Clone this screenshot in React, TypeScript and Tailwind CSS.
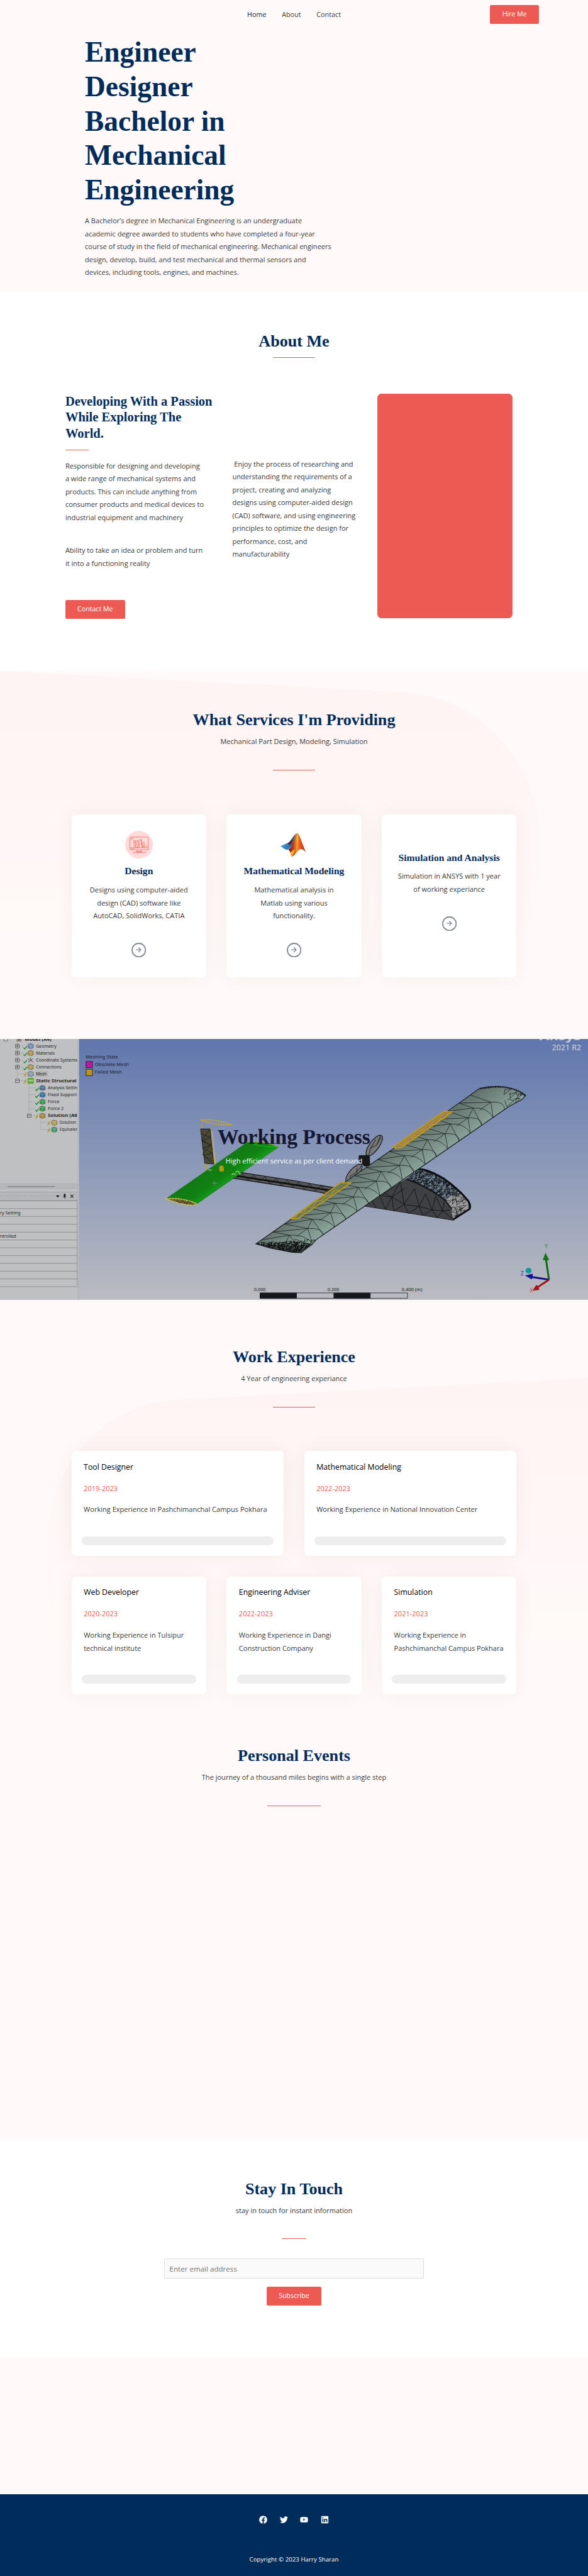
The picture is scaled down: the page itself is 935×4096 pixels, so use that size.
import React from "react";
import { FaFacebook, FaTwitter, FaYoutube, FaLinkedin } from "react-icons/fa";

const SERIF = "font-['Liberation_Serif',serif] font-bold text-[#002c5b]";

function Title({ children, className = "" }: { children: React.ReactNode; className?: string }) {
  return (
    <h2 className={`${SERIF} text-center text-[26.2px] leading-52 tracking-[-0.05px] whitespace-nowrap ${className}`}>
      {children}
    </h2>
  );
}

function Sub({ children, className = "" }: { children: React.ReactNode; className?: string }) {
  return <p className={`text-center leading-32 ${className}`}>{children}</p>;
}

function ArrowCircle({ className = "" }: { className?: string }) {
  return (
    <svg viewBox="0 0 36 36" className={`mx-auto block size-36 ${className}`} fill="none" stroke="#7f8a93">
      <circle cx="18" cy="18" r="16.5" strokeWidth="2.8" />
      <path d="M11 17.300H23.500M17.300 11.600l5.700 5.700-5.700 5.700" strokeWidth="2" />
    </svg>
  );
}

function DesignIcon() {
  return (
    <svg viewBox="0 0 68 68" className="mx-auto block size-68" fill="none" stroke="#ee564d" strokeWidth="1.1">
      <circle cx="34" cy="34" r="34" fill="#ffdcda" stroke="none" />
      <rect x="11.500" y="15.500" width="45" height="31" rx="2" />
      <path d="M11.500 41.500h45M14 44.300h8.500M14 18.500h7M14 21h3" />
      <path d="M29.500 46.500v4.500h9.500v-4.500M26 51.300h16.500M18 53h34" />
      <path d="M21.500 41V28.500h3.500V41M27.500 41V27l2.300-4.500 2.300 4.500V41zM34 41V22h7v19M37.500 25H41M38.500 28H41M37.500 31H41M38.500 34H41M43 41v-8.500l2-4 2.200 4V41M45 36v5M50 38.500h4M52 35.500h2" />
      <circle cx="23.200" cy="25.500" r="2.500" />
    </svg>
  );
}

function MatlabIcon() {
  return (
    <svg viewBox="0 0 68 68" className="mx-auto block size-68">
      <defs>
        <linearGradient id="mlOrange" x1="0" y1="0" x2="1" y2="0">
          <stop offset="0" stopColor="#6b1616" />
          <stop offset="0.28" stopColor="#c2401b" />
          <stop offset="0.5" stopColor="#f59a25" />
          <stop offset="0.62" stopColor="#e8601f" />
          <stop offset="1" stopColor="#b3201f" />
        </linearGradient>
        <linearGradient id="mlBlue" x1="0" y1="0" x2="1" y2="0">
          <stop offset="0" stopColor="#3f9ad8" />
          <stop offset="1" stopColor="#1d4f86" />
        </linearGradient>
      </defs>
      <path d="M2 37.500 19 30c6-2 7-7 11-12 5-7 10-12 13-12L30 35l-9 11-5 .500C11 46 7 41 2 37.500z" fill="url(#mlBlue)" />
      <path d="M19 30c5-2 7-5 10-9l2 3-6 11z" fill="#5e1a26" />
      <path d="M21 46C33 39 34 6 43 6c5 0 14 32 21 46-5-4-9-8-13-7-7 1-12 15-22 18-2-5-3-12-8-17z" fill="url(#mlOrange)" />
      <path d="M25 53c4-1 8-6 11-8-1 7-2 12-7 18-2-3-3-6-4-10z" fill="#f9b233" />
      <path d="M43 9c2 6 1.500 14 .500 21-2-6-2.500-14-.500-21z" fill="#f7d23a" />
    </svg>
  );
}

function ServiceCard({
  icon,
  title,
  lines,
  className = "",
}: {
  icon?: React.ReactNode;
  title: string;
  lines: string[];
  className?: string;
}) {
  return (
    <div className={`h-400 w-330 rounded-[6.5px] bg-white text-center shadow-[0_0_32px_rgba(60,20,20,0.06)] ${className}`}>
      {icon}
      <h3 className={`${SERIF} mt-18 text-[15.600px] leading-28 whitespace-nowrap`}>{title}</h3>
      <div className="mt-16">
        {lines.map((l) => (
          <p key={l} className="leading-32 whitespace-nowrap">
            {l}
          </p>
        ))}
      </div>
      <ArrowCircle className="mt-49" />
    </div>
  );
}

function JobCard({ title, years, lines, className = "" }: { title: string; years: string; lines: string[]; className?: string }) {
  return (
    <div className={`flex flex-col rounded-[6.5px] bg-white px-25 shadow-[0_0_32px_rgba(60,20,20,0.06)] ${className}`}>
      <h4 className="mt-24 pl-5 text-[12.300px] leading-32 text-black">{title}</h4>
      <p className="mt-20 pl-5 leading-32 text-[#ec5a53]">{years}</p>
      <div className="mt-20 pl-5">
        {lines.map((l) => (
          <p key={l} className="leading-32 whitespace-nowrap">
            {l}
          </p>
        ))}
      </div>
      <div className="mt-auto mb-25 h-22 rounded-[6.5px] bg-[#eeeeee]" />
    </div>
  );
}

type Pt = [number, number];
const lerp = (a: Pt, b: Pt, t: number): Pt => [a[0] + (b[0] - a[0]) * t, a[1] + (b[1] - a[1]) * t];
const p = (v: Pt) => `${v[0].toFixed(0)} ${v[1].toFixed(0)}`;

function wingMesh() {
  let d = "";
  const n = 17;
  for (let i = 0; i <= n; i++) {
    const t = i / n;
    const t1 = (i + 1) / n;
    const mid = lerp([2618, 412], [1580, 1170], t);
    const lead = lerp([2690, 455], [1665, 1205], t);
    const leadN = lerp([2690, 455], [1665, 1205], t1);
    const midN = lerp([2618, 412], [1580, 1170], t1);
    const trail = lerp([2510, 372], [1455, 1145], t);
    const trailN = lerp([2510, 372], [1455, 1145], t1);
    const q = i % 2 ? lerp(mid, trail, 0.3) : mid;
    d += `M${p(q)}Q${q[0] + 75} ${q[1] - 6} ${p(lead)}`;
    d += `M${p(q)}L${p(leadN)}M${p(q)}L${p(trail)}M${p(q)}L${p(trailN)}M${p(q)}L${p(midN)}`;
  }
  return d;
}

function denseMesh(x0: number, y0: number, x1: number, y1: number, step: number) {
  let d = "";
  let s = 7;
  const r = () => {
    s = (s * 16807) % 2147483647;
    return (s / 2147483647 - 0.5) * step * 0.8;
  };
  for (let y = y0; y <= y1; y += step) {
    for (let x = x0; x <= x1; x += step) {
      const a = x + r();
      const b = y + r();
      d += `M${a.toFixed(0)} ${b.toFixed(0)}l${step} ${r().toFixed(0)}l${(-step + r()).toFixed(0)} ${step}l${r().toFixed(0)} ${-step}`;
    }
  }
  return d;
}

const TREE: { y: number; lvl: number; t: string; b?: boolean; box?: string; c: string; ok?: boolean }[] = [
  { y: 95, lvl: 0, t: "Geometry", box: "+", c: "#6f8fb8", ok: true },
  { y: 134, lvl: 0, t: "Materials", box: "+", c: "#b8944a", ok: true },
  { y: 174, lvl: 0, t: "Coordinate Systems", box: "+", c: "", ok: true },
  { y: 213, lvl: 0, t: "Connections", box: "+", c: "#b09a50", ok: true },
  { y: 252, lvl: 0, t: "Mesh", c: "#8d9db3" },
  { y: 291, lvl: 0, t: "Static Structural", b: true, box: "-", c: "#5fa83a" },
  { y: 331, lvl: 1, t: "Analysis Settin", c: "#4c6ea0", ok: true },
  { y: 370, lvl: 1, t: "Fixed Support", c: "#2f6fb4", ok: true },
  { y: 409, lvl: 1, t: "Force", c: "#2e9c48", ok: true },
  { y: 448, lvl: 1, t: "Force 2", c: "#2e9c48", ok: true },
  { y: 488, lvl: 1, t: "Solution (A6", b: true, box: "-", c: "#a88a3c" },
  { y: 527, lvl: 2, t: "Solution", c: "#b8a04c" },
  { y: 566, lvl: 2, t: "Equivaler", c: "#3f9c6c" },
];

const TREE_WIDTH: Record<string, number> = {
  Geometry: 109,
  Materials: 100,
  "Coordinate Systems": 221,
  Connections: 136,
  Mesh: 57,
  "Static Structural": 216,
  "Analysis Settin": 158,
  "Fixed Support": 155,
  Force: 62,
  "Force 2": 85,
  "Solution (A6": 157,
  Solution: 88,
  Equivaler: 96,
};

function Simulation() {
  return (
    <svg
      viewBox="0 55 3136 1473"
      preserveAspectRatio="none"
      className="absolute inset-0 size-full font-['Noto_Sans',sans-serif]"
      fontSize="27"
    >
      <defs>
        <linearGradient id="sky" x1="0" y1="0" x2="0" y2="1">
          <stop offset="0" stopColor="#6076ad" />
          <stop offset="0.5" stopColor="#8d9ab9" />
          <stop offset="1" stopColor="#bbbcc1" />
        </linearGradient>
        <linearGradient id="wing" gradientUnits="userSpaceOnUse" x1="2080" y1="690" x2="2180" y2="830">
          <stop offset="0" stopColor="#63736e" />
          <stop offset="1" stopColor="#8aa39a" />
        </linearGradient>
        <linearGradient id="tail" gradientUnits="userSpaceOnUse" x1="1100" y1="800" x2="1180" y2="905">
          <stop offset="0" stopColor="#117a14" />
          <stop offset="0.6" stopColor="#118213" />
          <stop offset="1" stopColor="#13a31a" />
        </linearGradient>
        <clipPath id="wingClip">
          <path d="M1364 1212 1475 1130 2388 462 2560 333Q2625 318 2690 325 2770 340 2804 374L2785 396 2715 436 1688 1187 1665 1215 1605 1262 1560 1260 1440 1235z" />
        </clipPath>
        <clipPath id="podClip">
          <path d="M2165 848 2240 785Q2290 790 2370 840 2450 900 2500 965 2520 1000 2508 1018L2420 1078 2403 1015 2370 965Q2270 885 2165 848z" />
        </clipPath>
        <clipPath id="panelClip">
          <rect x="0" y="55" width="413" height="1473" />
        </clipPath>
      </defs>
      <rect x="414" y="55" width="2722" height="1473" fill="url(#sky)" />
      <rect x="0" y="55" width="422" height="1473" fill="#b4b6b9" />
      <rect x="0" y="55" width="414" height="814" fill="#bfc0c2" />
      <rect x="0" y="905" width="414" height="623" fill="#bfc0c2" />
      <path d="M40 889H292" stroke="#7a7b7d" strokeWidth="5" />
      <g clipPath="url(#panelClip)">
        <path d="M92 70V291M155 310V488M218 508V566" stroke="#77787a" strokeWidth="2" strokeDasharray="3 3" />
        <rect x="21" y="46" width="19" height="20" fill="#d8d8d8" stroke="#444" strokeWidth="2.500" />
        <rect x="88" y="50" width="28" height="20" fill="#b3933c" />
        <rect x="94" y="52" width="16" height="14" fill="#4d77b0" />
        <text x="132" y="65" fontWeight="700" fill="#1c1c1e" textLength="142" lengthAdjust="spacingAndGlyphs">
          Model (A4)
        </text>
        <rect x="188" y="235" width="66" height="35" fill="#b4b5b8" />
        {TREE.map((r) => {
          const x = 92 + r.lvl * 63;
          return (
            <g key={r.t}>
              <path d={`M${x} ${r.y}H${x + 34}`} stroke="#77787a" strokeWidth="2" strokeDasharray="3 3" />
              {r.box && (
                <>
                  <rect x={x - 9} y={r.y - 9} width="19" height="19" fill="#cfcfd0" stroke="#333" strokeWidth="2.500" />
                  <path d={r.box === "+" ? `M${x - 5} ${r.y}h11M${x} ${r.y - 6}v12` : `M${x - 5} ${r.y}h11`} stroke="#111" strokeWidth="2.500" />
                </>
              )}
              {r.ok ? (
                <path d={`M${x + 34} ${r.y + 8}l6 8 12-16`} stroke="#148a1c" strokeWidth="4.500" fill="none" />
              ) : (
                <path d={`M${x + 50} ${r.y - 8}l-14 12 8 1-10 12 15-12-7-2z`} stroke="#a8870f" strokeWidth="2" fill="#d2ab1e" />
              )}
              {r.t === "Coordinate Systems" ? (
                <g strokeWidth="4" fill="none">
                  <path d={`M${x + 71} ${r.y + 2}v-16`} stroke="#21a035" />
                  <path d={`M${x + 58} ${r.y + 12}l24-18`} stroke="#3a62b4" />
                  <path d={`M${x + 58} ${r.y - 8}l26 20`} stroke="#c13a3a" />
                </g>
              ) : r.t === "Static Structural" ? (
                <>
                  <rect x={x + 55} y={r.y - 16} width="33" height="33" fill="#5fa83a" />
                  <path d={`M${x + 60} ${r.y - 3}h24M${x + 66} ${r.y - 3}l-4 8M${x + 74} ${r.y - 3}l-4 8M${x + 82} ${r.y - 3}l-4 8`} stroke="#dfe8da" strokeWidth="2.500" />
                </>
              ) : (
                <>
                  <path
                    d={`M${x + 57} ${r.y - 9}l12-5 17 5v19l-12 6-17-6z`}
                    fill={r.c}
                    stroke="#4c4c46"
                    strokeWidth="2"
                    strokeLinejoin="round"
                  />
                  <path d={`M${x + 57} ${r.y - 7}l16 5 12-5M${x + 73} ${r.y - 2}v16`} stroke="#d3d6cf" strokeWidth="2" fill="none" opacity="0.7" />
                </>
              )}
              <text
                x={x + 100}
                y={r.y + 9}
                fontWeight={r.b ? 700 : 400}
                fill="#262628"
                textLength={TREE_WIDTH[r.t]}
                lengthAdjust="spacingAndGlyphs"
              >
                {r.t}
              </text>
            </g>
          );
        })}
        <path d="M0 919H413V968H0" fill="#b6b8ba" stroke="#8c8d8f" strokeWidth="2" />
        <path d="M0 937H290M0 943H290M0 949H290" stroke="#8f9092" strokeWidth="2" strokeDasharray="2 5" />
        <path d="M299 939h18l-9 11zM341 931h8v16h-8zM335 948h20M345 948v10" fill="#242426" stroke="#242426" strokeWidth="2" />
        <path d="M376 934l15 17M391 934l-15 17" stroke="#242426" strokeWidth="4" />
        <path
          d="M0 969H412M0 1013H412M0 1057H412M0 1101H412M0 1146H412M0 1190H412M0 1234H412M0 1278H412M0 1322H412M0 1366H412M0 1410H412M0 1454H412M412 969V1454"
          stroke="#85868a"
          strokeWidth="3"
        />
        <text x="0" y="1044" fill="#262628" textLength="110" lengthAdjust="spacingAndGlyphs">ry Setting</text>
        <text x="0" y="1176" fill="#262628" textLength="86" lengthAdjust="spacingAndGlyphs">ntrolled</text>
      </g>

      <text x="457" y="164" fill="#1b1f30" textLength="173" lengthAdjust="spacingAndGlyphs">Meshing State</text>
      <rect x="459" y="182" width="34" height="36" fill="#c015a0" stroke="#20222e" strokeWidth="3" />
      <rect x="459" y="226" width="34" height="36" fill="#bb9512" stroke="#20222e" strokeWidth="3" />
      <text x="506" y="207" fill="#1b1f30" textLength="182" lengthAdjust="spacingAndGlyphs">Obsolete Mesh</text>
      <text x="506" y="251" fill="#1b1f30" textLength="145" lengthAdjust="spacingAndGlyphs">Failed Mesh</text>

      <path d="M1245 842 1280 808 1568 855 1790 896 1750 930 1568 895z" fill="#57585a" stroke="#111" strokeWidth="4" />
      <path d="M1262 828 1568 878 1770 912" stroke="#0c0c0d" strokeWidth="9" fill="none" />
      <path
        d="M1262 840l30-24 30 38 30-30 30 40 30-30 30 40 30-30 30 40 30-30 30 38 30-28 30 38 30-28 30 38 30-28 30 36 30-26"
        stroke="#111"
        strokeWidth="3"
        fill="none"
      />

      <path d="M1075 535V560M1122 560 1146 765M1098 757l6 40" stroke="#c19a22" strokeWidth="9" strokeDasharray="8 4" fill="none" />
      <path d="M1132 580 1148 760" stroke="#c9c4bd" strokeWidth="5" strokeDasharray="6 5" />
      <path d="M1070 563H1120L1140 762 1092 757z" fill="#4b4a36" stroke="#141410" strokeWidth="3" />
      <path d="M1072 590l50 20-46 20 50 26-46 14 52 30-48 12 52 34M1120 565l-44 60 48 30-44 50 52 54" stroke="#15150f" strokeWidth="2.500" fill="none" />
      <path d="M1070 512Q1150 506 1236 540 1150 545 1070 512z" fill="none" stroke="#c4a53c" strokeWidth="8" strokeDasharray="9 4" />

      <path d="M887 955 1320 636Q1410 632 1486 664L1050 986Q970 950 887 955z" fill="url(#tail)" />
      <path d="M1320 636Q1420 634 1486 666" fill="none" stroke="#c0a020" strokeWidth="5" strokeDasharray="7 4" />
      <path d="M1322 640Q1400 668 1484 664" fill="none" stroke="#17c422" strokeWidth="3" />
      <path d="M887 957Q970 948 1050 986 1040 996 1000 992 930 980 887 957z" fill="#6d6535" stroke="#d0c050" strokeWidth="6" strokeDasharray="12 3" />
      <path d="M940 966l20 14 14-12 18 18 14-14 22 18" stroke="#111" strokeWidth="3" fill="none" />
      <path d="M1050 985 1486 666" stroke="#0c4d10" strokeWidth="3" strokeDasharray="4 3" />
      <path d="M1170 775q11-10 22 0l3 25q-13 8-26 0z" fill="#bb9512" />
      <path d="M1236 822q12-14 20 2M1256 808q14-14 20 2l6 12M1112 794l18 2" stroke="#cfd49c" strokeWidth="4" fill="none" />
      <path d="M1130 869h28M1144 855v28" stroke="#6f8cb4" strokeWidth="3" />

      <ellipse cx="1996" cy="657" rx="26" ry="68" transform="rotate(34 1996 657)" fill="#77787a" stroke="#121212" strokeWidth="4" />
      <ellipse cx="1888" cy="812" rx="24" ry="62" transform="rotate(40 1888 812)" fill="#77787a" stroke="#121212" strokeWidth="4" />
      <path d="M2030 602l-20 50-34 20 30-50M2010 652l20-40M1976 672l-8 34M1930 770l-30 40-34 20 10 20M1900 810l6-28" stroke="#121212" strokeWidth="3" fill="none" />
      <path d="M1914 712 1972 710 1974 770 1945 776 1912 745z" fill="#17181a" />

      <path d="M2165 848 1940 998 2420 1079 2405 1015 2370 965Q2270 885 2165 848z" fill="#3f4043" stroke="#121212" strokeWidth="3" />
      <path
        d="M2090 947 2025 910M2090 947l-70 -10M2090 947l-35 70M2090 947l45 -90M2090 947l70 -50M2090 947l10 78M2090 947l65 40M2155 990l-55 35M2155 990l25 50M2155 990l55-90M2155 990l-20-133M2155 990l80 10M2235 1000l-55 40M2235 1000l20 50M2235 1000l35-70M2235 1000l-25-100M2235 1000l70 20M2305 1020l-50 30M2305 1020l25 42M2305 1020l20-80M2305 1020l-35-90M2305 1020l55 5M2360 1025l-30 38M2360 1025l60 50M2360 1025l10-60M2360 1025l-35-80M2360 1025l48-5M1985 968l20 40M2025 940l30 75"
        stroke="#0f0f10"
        strokeWidth="3"
        fill="none"
      />
      <g clipPath="url(#podClip)">
        <rect x="2150" y="780" width="380" height="310" fill="#6b7c8e" />
        <path d="M2372 965 2452 912 2520 960 2530 1020 2420 1085z" fill="#9a9a9c" />
        <path d={denseMesh(2150, 780, 2520, 940, 15)} stroke="#101214" strokeWidth="3" fill="none" />
        <path d={denseMesh(2380, 940, 2520, 1080, 28)} stroke="#101214" strokeWidth="2.500" fill="none" />
        <path d="M2240 785Q2290 790 2370 840 2450 900 2500 965 2520 1000 2508 1018L2420 1078" stroke="#0f1012" strokeWidth="20" fill="none" />
        <path d="M2165 848Q2270 885 2370 965L2403 1015" stroke="#0f1012" strokeWidth="14" fill="none" />
      </g>

      <g clipPath="url(#wingClip)">
        <rect x="1350" y="310" width="1480" height="960" fill="url(#wing)" />
        <path d={wingMesh()} stroke="#131716" strokeWidth="2.500" fill="none" />
        <path d={denseMesh(2710, 330, 2810, 430, 34)} stroke="#131716" strokeWidth="2.500" fill="none" />
        <path d={denseMesh(1540, 1190, 1670, 1260, 26)} stroke="#131716" strokeWidth="2.500" fill="none" />
        <path d="M1364 1212 1568 1225 1640 1230 1605 1265 1560 1262 1440 1238z" fill="#3a403f" />
        <path d={denseMesh(1370, 1205, 1640, 1260, 20)} stroke="#0c0e0e" strokeWidth="4" fill="none" />
        <path d="M2560 333Q2640 318 2700 325 2770 340 2804 374" stroke="#151817" strokeWidth="14" strokeDasharray="9 4" fill="none" />
      </g>
      <path
        d="M1364 1212 1475 1130 2388 462 2560 333Q2625 318 2690 325 2770 340 2804 374L2785 396 2715 436 1688 1187 1665 1215 1605 1262 1560 1260 1440 1235z"
        fill="none"
        stroke="#171b1a"
        strokeWidth="4"
      />
      <path d="M2098 664 2368 463 2412 466 2350 512 2140 668 2110 672z" fill="#967d5c" stroke="#c29a14" strokeWidth="7" />
      <path d="M2120 662 2380 470M2140 662l30-30 20 0 20-32 24 2 22-34 24 0 20-32 26 0 20-32 24 2 20-34" stroke="#c29a14" strokeWidth="4" fill="none" />
      <path d="M1550 1070 1818 866 1870 868 1760 948 1590 1068z" fill="#6b7a55" stroke="#c29a14" strokeWidth="6" />
      <path d="M1570 1066l24-30 24 0 22-34 26 2 22-34 26 0 22-32 26 0 22-30 26 0" stroke="#c29a14" strokeWidth="4" fill="none" />

      <g fill="#15171b">
        <text x="1355" y="1478" textLength="62" lengthAdjust="spacingAndGlyphs">0.000</text>
        <text x="1747" y="1478" textLength="62" lengthAdjust="spacingAndGlyphs">0.200</text>
        <text x="2142" y="1478" textLength="110" lengthAdjust="spacingAndGlyphs">0.400 (m)</text>
        <rect x="1387" y="1489" width="786" height="30" fill="#b9babf" stroke="#2a2b2e" strokeWidth="3" />
        <rect x="1386" y="1488" width="197" height="32" />
        <rect x="1779" y="1488" width="197" height="32" />
      </g>

      <text x="2876" y="62" fill="#c3c8d3" fontWeight="700" fontSize="66" textLength="222" lengthAdjust="spacingAndGlyphs">Ansys</text>
      <text x="2944" y="119" fill="#c3c8d3" fontSize="42" fontWeight="500" textLength="155" lengthAdjust="spacingAndGlyphs">2021 R2</text>

      <g fontSize="30">
        <path d="M2928 1414 2912 1300" stroke="#0f6a14" strokeWidth="10" />
        <path d="M2909 1262l20 40q-16 8-34 0z" fill="#127616" />
        <path d="M2928 1414 2830 1398" stroke="#14148a" strokeWidth="10" />
        <path d="M2800 1391l40-11q4 16-4 32z" fill="#1212a0" />
        <path d="M2928 1414 2868 1456" stroke="#a01214" strokeWidth="10" />
        <path d="M2840 1476l20-32q14 4 16 28z" fill="#a81214" />
        <circle cx="2819" cy="1363" r="16" fill="#12999c" />
        <text x="2905" y="1239" fill="#2f9040">Y</text>
        <text x="2776" y="1389" fill="#3038c0">Z</text>
        <text x="2825" y="1487" fill="#c84a50">X</text>
      </g>
    </svg>
  );
}

const BTN = "flex items-center justify-center rounded-[2.600px] bg-[#ec5a53] text-[10.600px] text-white";

export default function App() {
  return (
    <div className="w-full overflow-hidden bg-[#fffaf9] font-['Open_Sans',sans-serif] text-[11.040px] text-[#3a3a3a] [--spacing:0.64925px]">
      <section className="h-714.5">
        <header className="relative flex h-70 items-center justify-end pr-120">
          <nav className="absolute inset-x-0 flex justify-center gap-38 text-[10.800px]">
            <a className="text-[#002c5b]">Home</a>
            <a>About</a>
            <a>Contact</a>
          </nav>
          <a className={`${BTN} z-10 h-46 w-120`}>Hire Me</a>
        </header>
        <div className="pt-16 pl-208">
          <h1 className={`${SERIF} text-[45.450px] leading-84.5`}>
            Engineer
            <br />
            Designer
            <br />
            Bachelor in
            <br />
            Mechanical
            <br />
            Engineering
          </h1>
          <p className="mt-17 w-640 leading-31.5 whitespace-nowrap">
            A Bachelor’s degree in Mechanical Engineering is an undergraduate
            <br />
            academic degree awarded to students who have completed a four-year
            <br />
            course of study in the field of mechanical engineering. Mechanical engineers
            <br />
            design, develop, build, and test mechanical and thermal sensors and
            <br />
            devices, including tools, engines, and machines.
          </p>
        </div>
      </section>

      <section className="h-929.5 bg-white pt-95.5">
        <Title>About Me</Title>
        <div className="mx-auto mt-13 h-2 w-103 bg-[#ec5a53]" />
        <div className="mt-87 flex pl-160">
          <div className="w-409">
            <h3 className={`${SERIF} text-[20.600px] leading-39 tracking-[-0.03px] whitespace-nowrap`}>
              Developing With a Passion
              <br />
              While Exploring The
              <br />
              World.
            </h3>
            <div className="mt-20.5 h-2 w-57 bg-[#ec5a53]" />
            <p className="mt-22.5 leading-31.5 whitespace-nowrap">
              Responsible for designing and developing
              <br />
              a wide range of mechanical systems and
              <br />
              products. This can include anything from
              <br />
              consumer products and medical devices to
              <br />
              industrial equipment and machinery
            </p>
            <p className="mt-49.5 leading-31.5 whitespace-nowrap">
              Ability to take an idea or problem and turn
              <br />
              it into a functioning reality
            </p>
            <a className={`${BTN} mt-74 h-46 w-146`}>Contact Me</a>
          </div>
          <p className="mt-157 w-355 leading-31.5 whitespace-nowrap">
            &nbsp;Enjoy the process of researching and
            <br />
            understanding the requirements of a
            <br />
            project, creating and analyzing
            <br />
            designs using computer-aided design
            <br />
            (CAD) software, and using engineering
            <br />
            principles to optimize the design for
            <br />
            performance, cost, and
            <br />
            manufacturability
          </p>
          <div className="h-550 w-331 rounded-[6.500px] bg-[#ec5a53]" />
        </div>
      </section>

      <section className="relative h-900">
        <svg viewBox="0 0 1440 900" preserveAspectRatio="none" className="absolute inset-0 size-full">
          <defs>
            <linearGradient id="blobA" gradientUnits="userSpaceOnUse" x1="0" y1="0" x2="0" y2="690">
              <stop offset="0" stopColor="#fef4f3" />
              <stop offset="0.400" stopColor="#fff5f5" />
              <stop offset="1" stopColor="#fffaf9" />
            </linearGradient>
          </defs>
          <path d="M0 0 996 52C1180 66 1322 230 1322 420V700H0z" fill="url(#blobA)" />
        </svg>
        <div className="relative pt-94">
          <Title>What Services I'm Providing</Title>
          <Sub className="mt-11">Mechanical Part Design, Modeling, Simulation</Sub>
          <div className="mx-auto mt-52 h-2 w-103 bg-[#ec5a53]" />
          <div className="mt-107 flex justify-center gap-50">
            <ServiceCard
              className="pt-40"
              icon={<DesignIcon />}
              title="Design"
              lines={["Designs using computer-aided", "design (CAD) software like", "AutoCAD, SolidWorks, CATIA"]}
            />
            <ServiceCard
              className="pt-40"
              icon={<MatlabIcon />}
              title="Mathematical Modeling"
              lines={["Mathematical analysis in", "Matlab using various", "functionality."]}
            />
            <ServiceCard
              className="pt-75"
              title="Simulation and Analysis"
              lines={["Simulation in ANSYS with 1 year", "of working experiance"]}
            />
          </div>
        </div>
      </section>

      <section className="relative h-639 overflow-hidden">
        <Simulation />
        <div className="relative pt-209 text-center">
          <h2 className="font-['Liberation_Serif',serif] text-[33.600px] leading-66 font-bold text-[#15162f]">Working Process</h2>
          <p className="mt-9 leading-32 text-white">High efficient service as per client demand</p>
        </div>
      </section>

      <section className="relative h-1067">
        <svg viewBox="0 0 1440 1067" preserveAspectRatio="none" className="absolute inset-0 size-full">
          <defs>
            <linearGradient id="blobB" gradientUnits="userSpaceOnUse" x1="0" y1="190" x2="0" y2="900">
              <stop offset="0" stopColor="#fef4f3" />
              <stop offset="0.450" stopColor="#fff6f6" />
              <stop offset="1" stopColor="#fffaf9" />
            </linearGradient>
          </defs>
          <path d="M1440 191 431 244C260 256 117 400 117 590V900H1440z" fill="url(#blobB)" />
        </svg>
        <div className="relative pt-114.5">
          <Title>Work Experience</Title>
          <Sub className="mt-11">4 Year of engineering experiance</Sub>
          <div className="mx-auto mt-52.5 h-2 w-103 bg-[#ec5a53]" />
          <div className="mt-107 flex justify-center gap-50">
            <JobCard className="h-256 w-520" title="Tool Designer" years="2019-2023" lines={["Working Experience in Pashchimanchal Campus Pokhara"]} />
            <JobCard
              className="h-256 w-520"
              title="Mathematical Modeling"
              years="2022-2023"
              lines={["Working Experience in National Innovation Center"]}
            />
          </div>
          <div className="mt-51 flex justify-center gap-50">
            <JobCard className="h-288 w-330" title="Web Developer" years="2020-2023" lines={["Working Experience in Tulsipur", "technical institute"]} />
            <JobCard className="h-288 w-330" title="Engineering Adviser" years="2022-2023" lines={["Working Experience in Dangi", "Construction Company"]} />
            <JobCard className="h-288 w-330" title="Simulation" years="2021-2023" lines={["Working Experience in", "Pashchimanchal Campus Pokhara"]} />
          </div>
        </div>
      </section>

      <section className="h-990 pt-24">
        <Title>Personal Events</Title>
        <Sub className="mt-11">The journey of a thousand miles begins with a single step</Sub>
        <div className="mx-auto mt-52.5 h-2 w-130 bg-[#ec5a53]" />
      </section>

      <section className="flex h-533 flex-col items-center bg-white pt-95">
        <Title>Stay In Touch</Title>
        <Sub className="mt-11">stay in touch for instant information</Sub>
        <div className="mt-52 h-2 w-59 bg-[#ec5a53]" />
        <input
          placeholder="Enter email address"
          className="mt-47 h-50 w-636 shrink-0 rounded-[1.300px] border border-[#dddddd] bg-[#fafafa] px-11.5 text-[11.600px] placeholder:text-[#757575]"
        />
        <button className={`${BTN} mt-20 h-46 w-134 shrink-0`}>Subscribe</button>
      </section>

      <div className="h-335" />

      <footer className="h-202 bg-[#002c5b] pt-53 text-white">
        <div className="flex justify-center gap-30 text-[13px]">
          <FaFacebook className="size-20" />
          <FaTwitter className="size-20" />
          <FaYoutube className="size-20" />
          <FaLinkedin className="size-20" />
        </div>
        <p className="mt-73 text-center text-[9.740px] leading-32">Copyright © 2023 Harry Sharan</p>
      </footer>
    </div>
  );
}
